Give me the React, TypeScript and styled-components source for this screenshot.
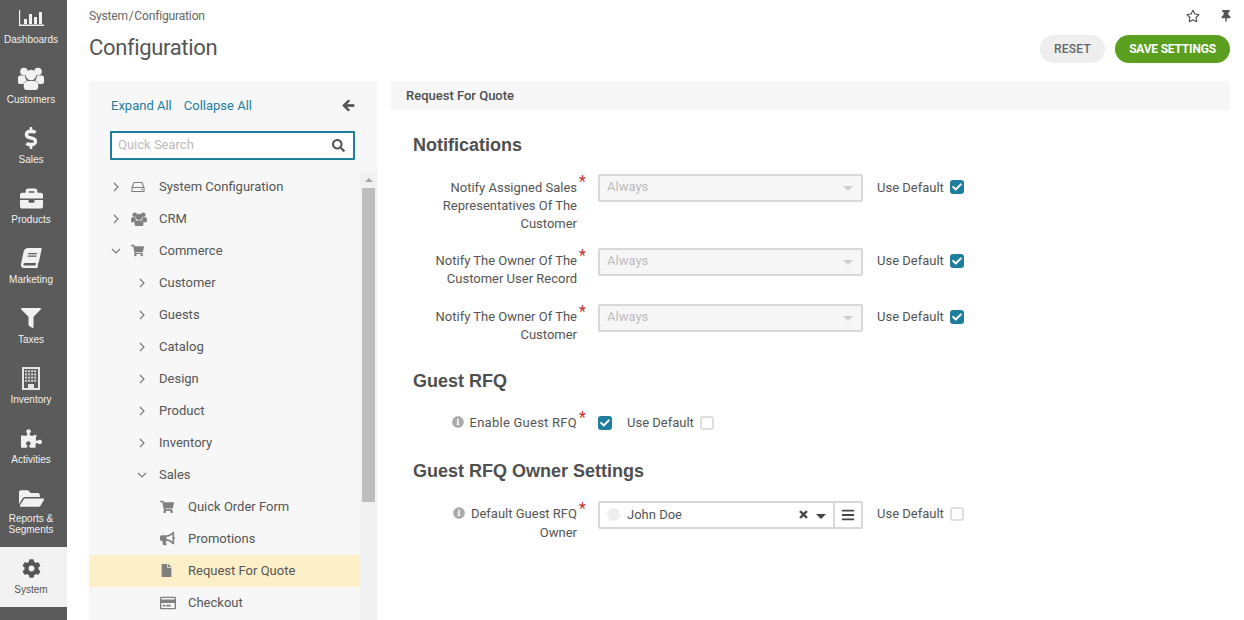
import React from 'react';
import styled, { createGlobalStyle } from 'styled-components';
import { FaBriefcase, FaBook, FaFilter, FaPuzzlePiece, FaFolderOpen, FaCog, FaDollarSign, FaArrowLeft, FaSearch, FaShoppingCart, FaBullhorn, FaFile, FaRegCreditCard, FaInfoCircle, FaTimes, FaBars, FaRegStar, FaThumbtack, FaCheck } from 'react-icons/fa';

const Global = createGlobalStyle`
  html, body { margin: 0; padding: 0; height: 620px; overflow: hidden; background: #fff; }
  body { font-family: Roboto, "Liberation Sans", sans-serif; color: #4f4f4f; }
`;

const Shell = styled.div`display: flex; height: 620px; overflow: hidden;`;
const Rail = styled.nav`width: 67px; flex: none; background: #5b5b5b; box-sizing: border-box;`;
const RailItem = styled.div<{ $active?: boolean; $two?: boolean }>`
  height: ${p => (p.$two ? '67px' : '60px')}; box-sizing: border-box;
  padding: ${p => (p.$active ? '11px' : '8px')} 5px 0 0;
  display: flex; flex-direction: column; align-items: center;
  background: ${p => (p.$active ? '#f2f2f2' : 'transparent')};
  color: ${p => (p.$active ? '#555' : '#f1f1f1')};
  font: 10px/11px "Liberation Sans", sans-serif; text-align: center;
`;
const RailIcon = styled.div`height: 20px; flex: none; display: flex; align-items: center; justify-content: center; svg { display: block; }`;
const RailLabel = styled.div<{ $two?: boolean }>`margin-top: ${p => (p.$two ? '5px' : '6px')}; line-height: ${p => (p.$two ? '11px' : '12px')}; white-space: pre-line;`;

const Main = styled.main`flex: 1; min-width: 0; padding: 0 14px 0 22px; display: flex; flex-direction: column;`;
const Top = styled.header`height: 81px; flex: none; display: flex; justify-content: space-between;`;
const TitleCol = styled.div`padding-top: 9px;`;
const Crumb = styled.div`font-size: 12px; line-height: 14px; color: #666; word-spacing: -2px; letter-spacing: -0.15px;`;
const Title = styled.h1`margin: 11px 0 0; font-size: 22px; line-height: 28px; font-weight: 400; color: #555; letter-spacing: -0.35px;`;
const ActionCol = styled.div`display: flex; flex-direction: column; align-items: flex-end;`;
const TopIcons = styled.div`height: 35px; display: flex; align-items: center; color: #555; gap: 20px; padding: 0 0 3px; margin-right: -2px; box-sizing: border-box;`;
const Buttons = styled.div`display: flex; gap: 10px;`;
const Btn = styled.button<{ $primary?: boolean }>`
  height: 28px; border: 0; border-radius: 14px; padding: 0; font-family: Roboto, sans-serif;
  width: ${p => (p.$primary ? '115px' : '65px')};
  background: ${p => (p.$primary ? '#5a9f1e' : '#eeeeee')};
  color: ${p => (p.$primary ? '#fff' : '#666')};
  font-size: 12px; font-weight: ${p => (p.$primary ? 700 : 500)}; letter-spacing: ${p => (p.$primary ? '-0.2px' : '.2px')}; text-transform: uppercase;
`;

const Columns = styled.div`flex: 1; display: flex; gap: 14px; min-height: 0;`;
const TreePanel = styled.aside`width: 288px; flex: none; background: #f7f7f7; border-radius: 3px 3px 0 0; display: flex; flex-direction: column;`;
const TreeTop = styled.div`height: 90px; flex: none; padding: 13px 22px 0 22px; box-sizing: border-box;`;
const LinkRow = styled.div`display: flex; align-items: center; height: 22px; gap: 12px; font-size: 13px; color: #1f7e9e;`;
const Collapse = styled.span`margin-left: auto; color: #555; display: flex; svg { stroke: currentColor; stroke-width: 30; }`;
const SearchBox = styled.div`margin-top: 15px; height: 29px; box-sizing: border-box; border: 2px solid #1f7e9e; background: #fff; border-radius: 1px; display: flex; align-items: center; padding: 0 8px 2px 6px; margin-left: -1px; color: #bbb; font-size: 13px; justify-content: space-between;`;
const SearchIcon = styled.span`color: #555; display: flex; margin-top: 2px;`;
const TreeBody = styled.div`flex: 1; display: flex; min-height: 0; overflow: hidden;`;
const Tree = styled.div`flex: 1; min-width: 0;`;
const Row = styled.div<{ $indent: number; $selected?: boolean }>`
  height: 32px; display: flex; align-items: center; padding-left: ${p => p.$indent}px; padding-bottom: 1px; box-sizing: border-box;
  background: ${p => (p.$selected ? '#fdefc8' : 'transparent')}; font-size: 13px; color: #555; white-space: nowrap;
`;
const Chev = styled.span<{ $w: number }>`width: ${p => p.$w}px; flex: none; display: flex; align-items: center;`;
const NodeIcon = styled.span<{ $w: number }>`width: ${p => p.$w}px; flex: none; display: flex; align-items: center; color: #808080;`;
const Scroll = styled.div`width: 17px; flex: none; background: #f1f1f1; display: flex; flex-direction: column; align-items: center;`;
const ScrollUp = styled.div`width: 0; height: 0; margin-top: 7px; border: 4px solid transparent; border-top: 0; border-bottom: 4px solid #a8a8a8; margin-bottom: 6px;`;
const Thumb = styled.div`width: 13px; height: 314px; background: #bdbdbd;`;

const Content = styled.section`flex: 1; min-width: 0;`;
const ContentHead = styled.div`height: 29px; background: #f7f7f7; border-radius: 3px; padding-left: 15px; display: flex; align-items: center; font-size: 13px; font-weight: 500; color: #4f4f4f;`;
const SectionTitle = styled.h2<{ $top: number }>`margin: ${p => p.$top}px 0 0 22px; font: 700 18px/24px "Liberation Sans", sans-serif; color: #4f4f4f;`;
const FormRow = styled.div<{ $top: number }>`display: flex; align-items: flex-start; margin-top: ${p => p.$top}px; margin-left: 36px; min-height: 28px;`;
const Label = styled.label<{ $wide?: boolean; $low?: boolean }>`width: 150px; flex: none; text-align: right; font-size: 13px; line-height: 18px; padding-top: ${p => (p.$low ? '5px' : '4px')}; margin-bottom: ${p => (p.$low ? '-1px' : '0')}; letter-spacing: ${p => (p.$wide ? '.25px' : '0')}; color: #555; box-sizing: border-box;`;
const Info = styled.span`color: #aaa; display: inline-block; margin-right: 6px; vertical-align: -1px; svg { display: inline-block; }`;
const Star = styled.span`width: 21px; flex: none; padding-left: 2px; box-sizing: border-box; color: #c9302c; font-size: 16px; line-height: 16px;`;
const SelectBox = styled.div`width: 265px; height: 28px; box-sizing: border-box; border: 2px solid #d8d8d8; background: #f6f6f6; border-radius: 2px; display: flex; align-items: center; padding: 0 8px 4px 7px; justify-content: space-between; font-size: 13px; color: #bcbcbc;`;
const Caret = styled.span<{ $c?: string }>`width: 0; height: 0; margin-top: 4px; border: 5px solid transparent; border-bottom: 0; border-top: 5px solid ${p => p.$c || '#d0d0d0'};`;
const UseDefault = styled.span<{ $gap: number; $low?: boolean }>`margin-left: ${p => p.$gap}px; font-size: 13px; line-height: 18px; padding-top: ${p => (p.$low ? '5px' : '4px')}; width: 73px; flex: none; color: #555;`;
const Check = styled.span<{ $on?: boolean }>`
  width: 14px; height: 14px; flex: none; box-sizing: border-box; border-radius: 3px; margin-top: 6px;
  background: ${p => (p.$on ? '#1f7e9e' : '#fff')}; border: ${p => (p.$on ? '0' : '2px solid #dedede')};
  display: flex; align-items: center; justify-content: center; color: #fff;
`;
const OwnerBox = styled.div`width: 265px; height: 28px; box-sizing: border-box; border: 2px solid #d8d8d8; border-radius: 2px; display: flex; align-items: center; background: #fff; font-size: 13px; color: #555;`;
const OwnerValue = styled.div`flex: 1; display: flex; align-items: center; padding: 0 7px 2px 7px;`;
const Avatar = styled.span`width: 13px; height: 13px; border-radius: 50%; background: #eee; margin-right: 7px; flex: none;`;
const OwnerName = styled.span`flex: 1;`;
const Clear = styled.span`display: flex; color: #444; margin-right: 7px; svg { stroke: currentColor; stroke-width: 25; }`;
const MenuBtn = styled.div`width: 26px; align-self: stretch; border-left: 2px solid #d8d8d8; display: flex; align-items: center; justify-content: center; color: #444;`;

const Dash = () => (
  <svg width="25" height="16" viewBox="0 0 25 16" fill="#f1f1f1">
    <path d="M0 0h1.2v14.6H25V16H0z" />
    <rect x="5" y="9" width="3" height="5" /><rect x="10" y="4" width="3" height="10" />
    <rect x="15" y="7" width="3" height="7" /><rect x="20" y="2" width="3" height="12" />
  </svg>
);
const Drive = () => (
  <svg width="14" height="12" viewBox="0 0 14 12" fill="none" stroke="#808080" strokeWidth="1.1">
    <path d="M3 1.5h8L13 6.5v4H1v-4z" /><path d="M1 6.5h12" /><path d="M10 8.5h1.5" />
  </svg>
);
const People = ({ w, h }: { w: number; h: number }) => (
  <svg width={w} height={h} viewBox="0 0 26 23" fill="currentColor">
    <circle cx="6" cy="4.5" r="3.8" /><circle cx="20" cy="4.5" r="3.8" />
    <path d="M0 10.5c0-1.5 1.5-2 3-2h4.5c-.8 2 .3 4 1.5 5-1.8.6-3 1.8-3.6 3.5H2c-1.2 0-2-.8-2-2z" />
    <path d="M26 10.5c0-1.5-1.5-2-3-2h-4.5c.8 2-.3 4-1.5 5 1.8.6 3 1.8 3.6 3.5H24c1.2 0 2-.8 2-2z" />
    <circle cx="13" cy="8" r="5.2" />
    <path d="M5.8 17.5c0-2 1.7-3.4 3.6-3.4h7.2c1.9 0 3.6 1.4 3.6 3.4v3c0 1.5-1.2 2.5-2.8 2.5H8.6c-1.6 0-2.8-1-2.8-2.5z" />
  </svg>
);
const Building = () => (
  <svg width="18" height="23" viewBox="0 0 18 23">
    <rect x="0" y="0" width="18" height="23" fill="#e4e4e4" />
    <rect x="2" y="2" width="14" height="19" fill="#5b5b5b" />
    {[0, 1, 2, 3].map(r => [0, 1, 2, 3].map(c => <rect key={`${r}${c}`} x={3.2 + c * 3} y={3.2 + r * 3.2} width="2" height="2" fill="#d8d8d8" />))}
    <rect x="6" y="17" width="6" height="6" fill="#e4e4e4" />
  </svg>
);
const Chevron = ({ open }: { open?: boolean }) => (
  <svg width="10" height="10" viewBox="0 0 10 10" fill="none" stroke="#7a7a7a" strokeWidth="1.2">
    <path d={open ? 'M1 3l4 4 4-4' : 'M3 1l4 4-4 4'} />
  </svg>
);

const rail = [
  { t: 'Dashboards', i: <Dash /> }, { t: 'Customers', i: <People w={26} h={23} /> },
  { t: 'Sales', i: <FaDollarSign size={22} /> }, { t: 'Products', i: <FaBriefcase size={23} /> },
  { t: 'Marketing', i: <FaBook size={20} style={{ transform: 'skewX(-12deg)' }} /> }, { t: 'Taxes', i: <FaFilter size={20} /> },
  { t: 'Inventory', i: <Building /> }, { t: 'Activities', i: <FaPuzzlePiece size={21} /> },
  { t: 'Reports &\nSegments', i: <FaFolderOpen size={25} /> }, { t: 'System', i: <FaCog size={19} />, a: true },
];

type N = { t: string; l: 0 | 1 | 2; o?: boolean; i?: React.ReactNode; s?: boolean };
const nodes: N[] = [
  { t: 'System Configuration', l: 0, i: <Drive /> },
  { t: 'CRM', l: 0, i: <People w={16} h={14} /> },
  { t: 'Commerce', l: 0, o: true, i: <FaShoppingCart size={13} /> },
  { t: 'Customer', l: 1 }, { t: 'Guests', l: 1 }, { t: 'Catalog', l: 1 }, { t: 'Design', l: 1 },
  { t: 'Product', l: 1 }, { t: 'Inventory', l: 1 }, { t: 'Sales', l: 1, o: true },
  { t: 'Quick Order Form', l: 2, i: <FaShoppingCart size={14} /> },
  { t: 'Promotions', l: 2, i: <FaBullhorn size={15} /> },
  { t: 'Request For Quote', l: 2, i: <FaFile size={13} />, s: true },
  { t: 'Checkout', l: 2, i: <FaRegCreditCard size={16} /> },
];

const indent = { 0: 22, 1: 48, 2: 71 };

const Node = ({ n }: { n: N }) => (
  <Row $indent={indent[n.l]} $selected={n.s}>
    {n.l < 2 && <Chev $w={n.l === 0 ? 20 : 22}><Chevron open={n.o} /></Chev>}
    {n.i && <NodeIcon $w={28}>{n.i}</NodeIcon>}
    {n.t}
  </Row>
);

export default function App() {
  return (
    <Shell>
      <Global />
      <Rail>
        {rail.map(r => {
          const two = r.t.includes('\n');
          return (
            <RailItem key={r.t} $active={r.a} $two={two}>
              <RailIcon>{r.i}</RailIcon>
              <RailLabel $two={two}>{r.t}</RailLabel>
            </RailItem>
          );
        })}
      </Rail>
      <Main>
        <Top>
          <TitleCol>
            <Crumb>System / Configuration</Crumb>
            <Title>Configuration</Title>
          </TitleCol>
          <ActionCol>
            <TopIcons><FaRegStar size={14} /><FaThumbtack size={12} /></TopIcons>
            <Buttons><Btn>Reset</Btn><Btn $primary>Save Settings</Btn></Buttons>
          </ActionCol>
        </Top>
        <Columns>
          <TreePanel>
            <TreeTop>
              <LinkRow><span>Expand All</span><span>Collapse All</span><Collapse><FaArrowLeft size={13} /></Collapse></LinkRow>
              <SearchBox>Quick Search<SearchIcon><FaSearch size={13} /></SearchIcon></SearchBox>
            </TreeTop>
            <TreeBody>
              <Tree>{nodes.map(n => <Node key={n.t} n={n} />)}</Tree>
              <Scroll><ScrollUp /><Thumb /></Scroll>
            </TreeBody>
          </TreePanel>
          <Content>
            <ContentHead>Request For Quote</ContentHead>
            <SectionTitle $top={23}>Notifications</SectionTitle>
            <FormRow $top={17}>
              <Label $low>Notify Assigned Sales Representatives Of The Customer</Label><Star>*</Star>
              <SelectBox>Always<Caret /></SelectBox>
              <UseDefault $gap={14} $low>Use Default</UseDefault><Check $on><FaCheck size={10} /></Check>
            </FormRow>
            <FormRow $top={16}>
              <Label>Notify The Owner Of The Customer User Record</Label><Star>*</Star>
              <SelectBox>Always<Caret /></SelectBox>
              <UseDefault $gap={14}>Use Default</UseDefault><Check $on><FaCheck size={10} /></Check>
            </FormRow>
            <FormRow $top={16}>
              <Label>Notify The Owner Of The Customer</Label><Star>*</Star>
              <SelectBox>Always<Caret /></SelectBox>
              <UseDefault $gap={14}>Use Default</UseDefault><Check $on><FaCheck size={10} /></Check>
            </FormRow>
            <SectionTitle $top={25}>Guest RFQ</SectionTitle>
            <FormRow $top={17}>
              <Label $wide><Info><FaInfoCircle size={12} /></Info>Enable Guest RFQ</Label><Star>*</Star>
              <Check $on><FaCheck size={10} /></Check>
              <UseDefault $gap={15}>Use Default</UseDefault><Check />
            </FormRow>
            <SectionTitle $top={21}>Guest RFQ Owner Settings</SectionTitle>
            <FormRow $top={18}>
              <Label><Info><FaInfoCircle size={12} /></Info>Default Guest RFQ Owner</Label><Star>*</Star>
              <OwnerBox>
                <OwnerValue><Avatar /><OwnerName>John Doe</OwnerName><Clear><FaTimes size={11} /></Clear><Caret $c="#444" /></OwnerValue>
                <MenuBtn><FaBars size={14} /></MenuBtn>
              </OwnerBox>
              <UseDefault $gap={14}>Use Default</UseDefault><Check />
            </FormRow>
          </Content>
        </Columns>
      </Main>
    </Shell>
  );
}
